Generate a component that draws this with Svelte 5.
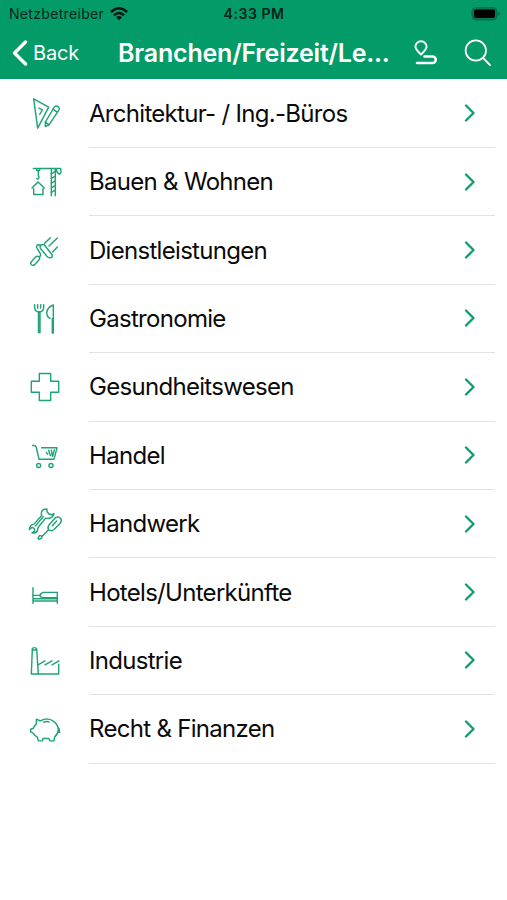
<script>
    const items = [
        {
            label: "Architektur- / Ing.-Büros",
            viewBox: "15 16.5 120 120",
            paths: [
                "M41 31 L86 56 L53 119 Z",
                "M57 59 L67 64 L59 78",
                "M104 54 Q109 51 115 55 Q120 59 117 64 L87 109 L76 114 L76 101 Z",
                "M99 62 L111 70 M76 101 L87 109",
            ],
        },
        {
            label: "Bauen & Wohnen",
            viewBox: "15 17.7 120 120",
            paths: [
                "M40 37 H122 Q125 47 120 54 Q112 53 109 41",
                "M94 38 V119 M106 38 V119",
                "M94 53 L106 46 M94 67 L106 60 M94 81 L106 74 M94 95 L106 88 M94 109 L106 102",
                "M50 38 V43 H59 V38 M55 43 V60 M50 67 Q56 72 57 62",
                "M36 96 L54 78 L73 96 M41 98 V115 H69 V98",
            ],
        },
        {
            label: "Dienstleistungen",
            viewBox: "15 18.9 120 120",
            paths: [
                "M63 61 Q70 57 75 63 L96 90 Q99 97 92 99 Q86 101 80 94 L62 72 Q58 65 63 61 Z",
                "M61 61 L53 60 Q47 65 52 72 L61 87 Q64 96 56 95",
                "M56 96 Q62 99 57 105 L45 119 Q38 125 33 119 Q30 115 36 109 L47 97 Q51 93 56 96 Z",
                "M74 56 L91 39 M87 64 L112 40 M98 82 L112 67",
            ],
        },
        {
            label: "Gastronomie",
            viewBox: "15 20.1 120 120",
            paths: [
                "M44 37 V47 Q45 58 57 59 Q70 58 71 47 V37 M53 37 V47 M62 37 V47",
                "M55.5 59 V121 H60 V59",
                "M100 38 V122 H97 V79 M100 38 Q82 44 80 61 Q81 75 90 78",
            ],
        },
        {
            label: "Gesundheitswesen",
            viewBox: "15 21.3 120 120",
            paths: [
                "M58 41 H92 V64 H116 V97 H92 V122 H58 V97 H34 V64 H58 Z",
            ],
        },
        {
            label: "Handel",
            viewBox: "15 16.5 120 120",
            paths: [
                "M38 45 H43 Q48 46 49 51 L57 86 H102 L111 52 H65",
                "M79 66 L83 71 M86 60 L91 75 M94 59 L97 77 M103 58 L98 77",
                "M50 105 a6 6 0 1 0 12 0 a6 6 0 1 0 -12 0",
                "M87 105 a6 6 0 1 0 12 0 a6 6 0 1 0 -12 0",
            ],
        },
        {
            label: "Handwerk",
            viewBox: "15 17.7 120 120",
            paths: [
                "M81 33 Q69 31 65 41 Q63 46 65 52 L42 78 Q30 79 28 94 L36 88 L43 91 L44 99 L36 104 Q53 108 54 88 L77 60 Q97 64 102 47 L94 50 L86 47 L81 40 Z",
                "M46 84 L70 55",
                "M107 58 Q116 54 122 61 Q127 68 120 76 L102 94 Q94 101 86 95 Q81 88 88 79 Z",
                "M97 83 L110 69",
                "M85 96 L65 116 M65 116 L65 120 L57 124 L54 120 L59 112 L65 114",
            ],
        },
        {
            label: "Hotels/Unterkünfte",
            viewBox: "15 18.9 120 120",
            paths: [
                "M39 63 V110 M112 77 V110 M39 96 H112 M39 103 H112",
                "M39 86 H61 M112 77 H69 L61 82 V90 L67 93 H112",
            ],
        },
        {
            label: "Industrie",
            viewBox: "15 20.1 120 120",
            paths: [
                "M34 119 L37 44 Q38 40 43 40 Q49 40 50 44 L55 119 Z",
                "M55 119 H116 V90 M37 47 H50",
                "M54 92 L75 80 M75 92 L96 80 M96 92 L117 80",
            ],
        },
        {
            label: "Recht & Finanzen",
            viewBox: "15 21.3 120 120",
            paths: [
                "M61 57 L49 52 V66 Q42 72 40 79 L32 82 V90 L40 94 Q44 102 52 106 L55 117 H67 L69 110 H87 L90 117 H102 L104 105 Q114 97 115 84 Q114 69 103 60 Q94 52 80 51 Q69 52 61 57 Z",
                "M71 61 Q79 57 87 61 M115 78 Q120 82 119 91 L114 91",
            ],
        },
    ];
</script>

<div class="screen">
    <header>
        <div class="status">
            <div class="carrier">
                <span>Netzbetreiber</span>
                <svg class="wifi" viewBox="0 0 18 14">
                    <path d="M1 5 Q9 -2.5 17 5 M4 8.2 Q9 3.8 14 8.2" />
                    <path class="dot" d="M6 10.3 Q9 7.9 12 10.3 L9 13.3 Z" />
                </svg>
            </div>
            <span class="time">4:33 PM</span>
            <svg class="battery" viewBox="0 0 30 16">
                <rect class="shell" x="1" y="1.5" width="25" height="12.5" rx="4" />
                <rect x="3" y="3.5" width="21" height="8.5" rx="2" />
                <path class="cap" d="M27.3 5.5 Q30.3 7.7 27.3 10 Z" />
            </svg>
        </div>
        <nav>
            <button class="back">
                <svg viewBox="0 0 16 26">
                    <path d="M13.5 2 L2.5 13 L13.5 24" />
                </svg>
                <span>Back</span>
            </button>
            <h1>Branchen/Freizeit/Le...</h1>
            <button class="route" aria-label="Route">
                <svg viewBox="0 0 24 26">
                    <path d="M7 14.5 Q1.4 9 1.4 6.7 A5.6 5.4 0 0 1 12.6 6.7 Q12.6 9 7 14.5 Z" />
                    <path class="road" d="M10.5 16.5 H18.5 A3.2 3.2 0 0 1 18.5 23 H3" />
                </svg>
            </button>
            <button class="search" aria-label="Suche">
                <svg viewBox="0 0 28 28">
                    <circle cx="11.8" cy="11.5" r="10.2" />
                    <path d="M19 18.8 L26 26" />
                </svg>
            </button>
        </nav>
    </header>

    <ul>
        {#each items as item}
            <li>
                <svg class="icon" viewBox={item.viewBox}>
                    {#each item.paths as d}
                        <path {d} />
                    {/each}
                </svg>
                <div class="row">
                    <span>{item.label}</span>
                    <svg class="chevron" viewBox="0 0 12 18">
                        <path d="M2 1.5 L9.5 9 L2 16.5" />
                    </svg>
                </div>
            </li>
        {/each}
    </ul>
</div>

<style>
    :global(body) {
        margin: 0;
        background: #fff;
    }

    .screen {
        width: 507px;
        height: 900px;
        overflow: hidden;
        background: #fff;
        font-family: Inter, "Liberation Sans", sans-serif;
    }

    svg {
        display: block;
        flex: none;
        fill: none;
        stroke-linecap: round;
        stroke-linejoin: round;
    }

    header {
        height: 79px;
        background: #039b67;
    }

    .status {
        display: grid;
        grid-template-columns: 1fr auto 1fr;
        align-items: center;
        height: 27px;
        padding: 0 6px 0 9px;
        color: #04261b;
        font-size: 14px;
    }

    .carrier {
        display: flex;
        align-items: center;
        gap: 6px;
        letter-spacing: 0.32px;
    }

    .wifi {
        width: 18px;
        height: 14px;
        stroke: #00150e;
        stroke-width: 2.5;
        stroke-linecap: butt;
    }

    .wifi .dot {
        fill: #00150e;
        stroke: none;
    }

    .time {
        margin-right: 2px;
        font-weight: 600;
        letter-spacing: 0.55px;
    }

    .battery {
        justify-self: end;
        width: 30px;
        height: 16px;
        fill: #000;
    }

    .battery .shell {
        fill: #037a51;
        stroke: #036e49;
    }

    .battery .cap {
        fill: #036e49;
    }

    nav {
        display: flex;
        align-items: center;
        height: 51px;
        padding-left: 12px;
    }

    button {
        display: flex;
        align-items: center;
        padding: 0;
        border: none;
        background: none;
        color: #fff;
        font-family: inherit;
    }

    button svg {
        stroke: #fff;
    }

    .back {
        gap: 5px;
        width: 106px;
        font-size: 20px;
        letter-spacing: -0.2px;
    }

    .back svg {
        width: 16px;
        height: 26px;
        stroke-width: 3.4;
    }

    h1 {
        width: 296px;
        margin: 0;
        color: #fff;
        font-size: 25px;
        font-weight: 600;
        letter-spacing: -0.2px;
        white-space: nowrap;
    }

    .route svg {
        width: 24px;
        height: 26px;
        stroke-width: 2;
    }

    .route .road {
        stroke-width: 2.5;
    }

    .search {
        margin-left: 26px;
    }

    .search svg {
        width: 28px;
        height: 28px;
        stroke-width: 1.8;
    }

    ul {
        margin: 0;
        padding: 0.6px 0 0;
        list-style: none;
    }

    li {
        display: flex;
        align-items: center;
        height: 68.4px;
        padding: 0 12px 0 25px;
    }

    .icon {
        width: 40px;
        height: 40px;
        margin-right: 24px;
        stroke: #1fa375;
        stroke-width: 4.3;
    }

    .row {
        display: flex;
        flex: 1;
        align-items: center;
        justify-content: space-between;
        box-sizing: border-box;
        height: 100%;
        padding-right: 19px;
        border-bottom: 1px solid #e2e2e2;
        color: #0a0a0a;
        font-size: 24px;
        letter-spacing: -0.7px;
    }

    .chevron {
        width: 12px;
        height: 18px;
        stroke: #0b9e6b;
        stroke-width: 2.3;
    }
</style>
